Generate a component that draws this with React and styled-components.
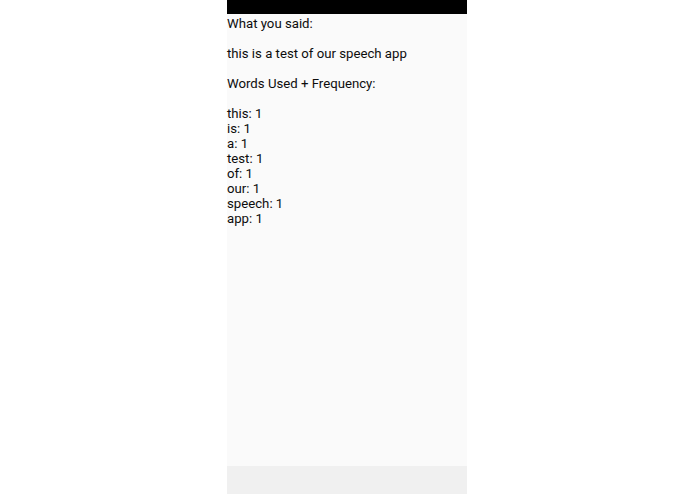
import React from "react";
import styled, { createGlobalStyle } from "styled-components";

const Global = createGlobalStyle`
  html, body { margin: 0; padding: 0; background: #ffffff; }
  body { font-family: Roboto, "Liberation Sans", sans-serif; }
`;

const Page = styled.div`
  display: flex;
  justify-content: center;
  height: 494px;
  padding-right: 1px;
`;

const Phone = styled.div`
  width: 240px;
  display: flex;
  flex-direction: column;
  background: #fafafa;
`;

const StatusBar = styled.div`
  height: 14px;
  background: #000000;
`;

const Content = styled.div`
  flex: 1;
  padding-top: 1.5px;
  color: #0d0d0d;
  font-size: 13.2px;
  line-height: 15px;
`;

const Para = styled.p`
  margin: 0 0 15px;
`;

const WordRow = styled.div``;

const BottomBar = styled.div`
  height: 28px;
  background: #f0f0f0;
`;

const spoken = "this is a test of our speech app";

export default function App() {
  const counts = spoken.split(" ").reduce((acc, w) => {
    acc[w] = (acc[w] || 0) + 1;
    return acc;
  }, {});

  return (
    <Page>
      <Global />
      <Phone>
        <StatusBar />
        <Content>
          <Para>What you said:</Para>
          <Para>{spoken}</Para>
          <Para>Words Used + Frequency:</Para>
          {Object.keys(counts).map((w) => (
            <WordRow key={w}>
              {w}: {counts[w]}
            </WordRow>
          ))}
        </Content>
        <BottomBar />
      </Phone>
    </Page>
  );
}
